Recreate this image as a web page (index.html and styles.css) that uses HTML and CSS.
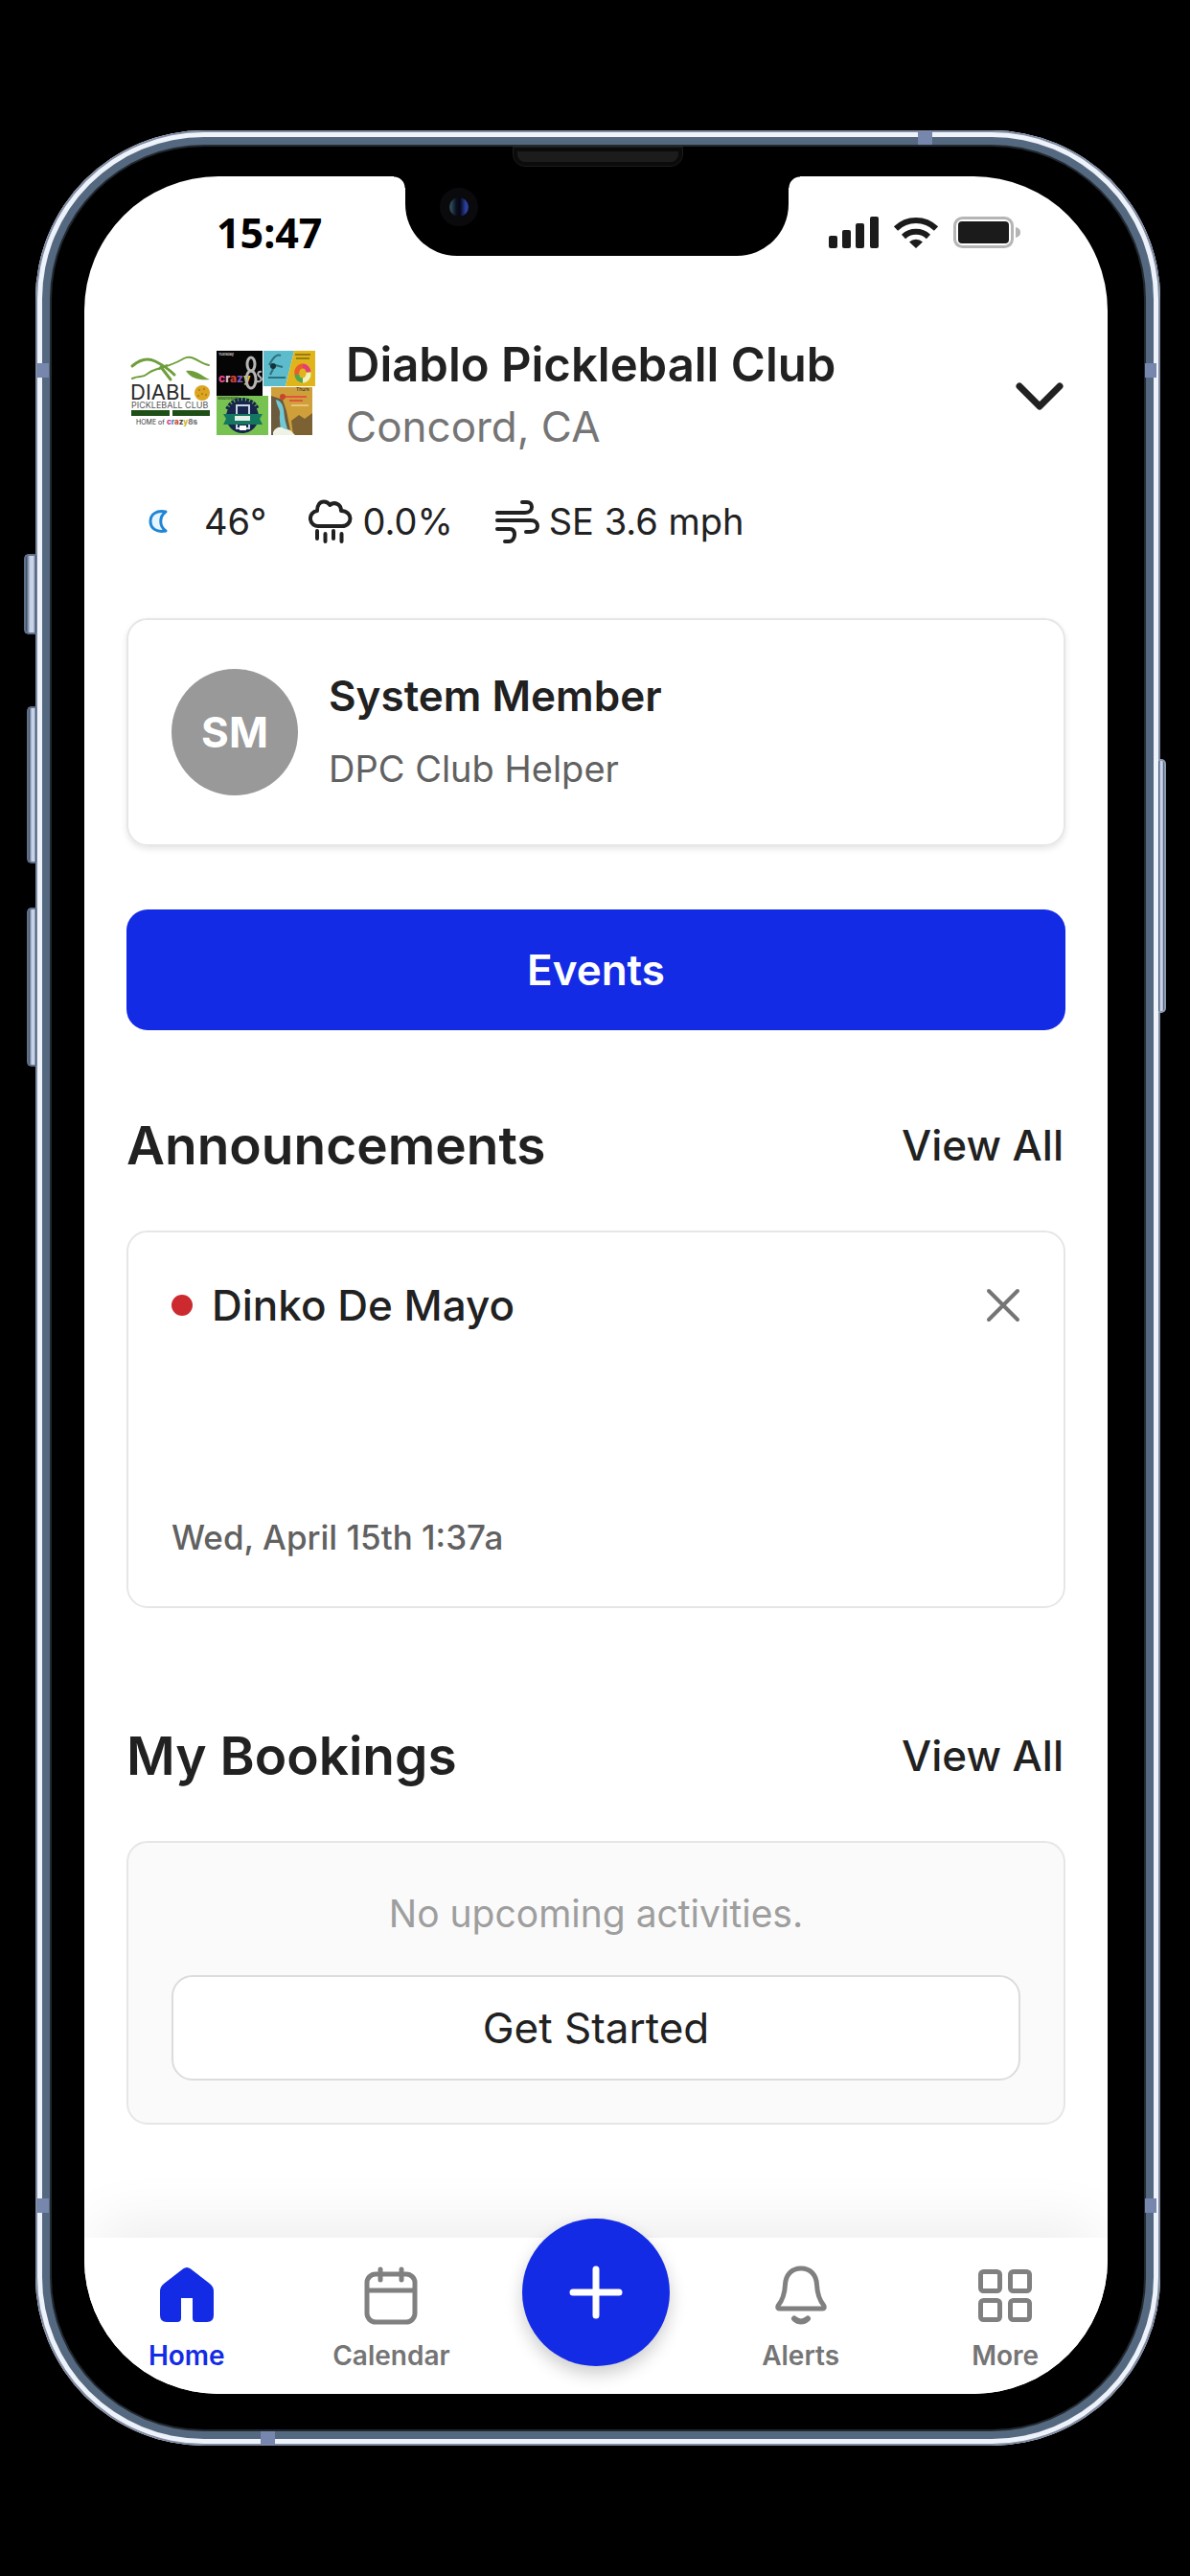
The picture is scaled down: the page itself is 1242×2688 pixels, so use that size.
FILE: index.html
```html
<!DOCTYPE html>
<html lang="en">
<head>
<meta charset="utf-8">
<meta name="viewport" content="width=device-width, initial-scale=1">
<title>Diablo Pickleball Club</title>
<link rel="stylesheet" href="styles.css">
</head>
<body>
<div class="phone">
  <span class="key key-mute"></span>
  <span class="key key-up"></span>
  <span class="key key-down"></span>
  <span class="key key-power"></span>
  <span class="band band-side band-left band-high"></span>
  <span class="band band-side band-right band-high"></span>
  <span class="band band-side band-left band-low"></span>
  <span class="band band-side band-right band-low"></span>
  <span class="band band-top"></span>
  <span class="band band-bottom"></span>
  <span class="speaker"></span>

  <div class="screen">
    <div class="notch"><span class="camera"></span></div>

    <div class="status">
      <span class="time">15:47</span>
      <div class="status-icons">
        <svg width="52" height="34" viewBox="0 0 52 34" fill="#1b1b1b" aria-hidden="true">
          <rect x="0" y="20" width="9" height="13" rx="2"/><rect x="14" y="14" width="9" height="19" rx="2"/>
          <rect x="28" y="7" width="9" height="26" rx="2"/><rect x="43" y="0" width="9" height="33" rx="2"/>
        </svg>
        <svg width="46" height="34" viewBox="0 0 46 34" fill="none" stroke="#1b1b1b" stroke-width="6" aria-hidden="true">
          <path d="M2 12.500A30 30 0 0 1 44 12.500"/><path d="M10 21A19 19 0 0 1 36 21"/>
          <path d="M16 26.500a10 10 0 0 1 14 0L23 33z" fill="#1b1b1b" stroke="none"/>
        </svg>
        <svg width="70" height="34" viewBox="0 0 70 34" aria-hidden="true">
          <rect x="1.500" y="1.500" width="60" height="30" rx="8" fill="#fff" stroke="#b5b5b5" stroke-width="3"/>
          <rect x="5" y="5" width="53" height="23" rx="4" fill="#1b1b1b"/>
          <path d="M65 11c4 1 5 3 5 5.500s-1 4.500-5 5.500z" fill="#b5b5b5"/>
        </svg>
      </div>
    </div>

    <main class="content">
      <header class="club">
        <svg class="club-logo" width="200" height="104" viewBox="0 0 200 104" role="img" aria-label="Diablo Pickleball Club logo">
          <g fill="none" stroke="#6f9f3c" stroke-linecap="round">
            <path d="M6 21C14 14 22 12 30 16S46 26 50 30" stroke-width="3"/>
            <path d="M34 24C44 20 52 18 60 13S76 18 86 20" stroke-width="2"/>
            <path d="M6 34C14 30 16 34 22 29S36 24 42 20" stroke-width="2"/>
            <path d="M36 22L46 35" stroke-width="3"/>
          </g>
          <path d="M62 26C72 24 78 31 87 35C78 36 68 35 62 26z" fill="#6f9f3c"/>
          <text x="4" y="56" font-size="22" fill="#2b2b2b" class="logo-text">DIABL</text>
          <circle cx="79" cy="49" r="8" fill="#dba520"/>
          <g fill="#a87b10"><circle cx="76" cy="46" r="1"/><circle cx="81" cy="45" r="1"/><circle cx="79" cy="50" r="1"/><circle cx="75" cy="52" r="1"/><circle cx="83" cy="51" r="1"/></g>
          <text x="5" y="65" font-size="9" fill="#555" class="logo-text">PICKLEBALL CLUB</text>
          <path d="M5 67h40v6H5zM48 67h39v6H48z" fill="#1d4f17"/>
          <text x="10" y="82" font-size="7" fill="#333" class="logo-text">HOME of</text>
          <text x="42" y="82" font-size="8" class="logo-fun"><tspan fill="#c33a8a">c</tspan><tspan fill="#3c8ac3">r</tspan><tspan fill="#d2462f">a</tspan><tspan fill="#444">z</tspan><tspan fill="#d5b32a">y</tspan><tspan fill="#777">8s</tspan></text>
          <rect x="94" y="5" width="48" height="47" fill="#050505"/>
          <text x="96" y="10" font-size="4" fill="#fff" class="logo-text">Tuesday</text>
          <text x="96" y="38" font-size="12" class="logo-fun"><tspan fill="#ee4a8a">c</tspan><tspan fill="#e8b9d6">r</tspan><tspan fill="#d9433a">a</tspan><tspan fill="#7a5fc0">z</tspan><tspan fill="#e6c62c">y</tspan></text>
          <g fill="none" stroke="#b5b5b5" stroke-width="3"><ellipse cx="130" cy="19" rx="4" ry="7"/><ellipse cx="130" cy="35" rx="5" ry="9"/><path d="M141 27c-4-1-5 3-2 5s2 6-3 5" stroke-width="2"/></g>
          <path d="M143 5h32l-9 37h-23z" fill="#5cbccb"/><path d="M175 5h22v37h-31z" fill="#e0b51b"/>
          <path d="M149 20c4-8 8-12 12-10M150 30l5-10 8 2M148 33h18" stroke="#2e6f7d" fill="none" stroke-width="2"/>
          <circle cx="153" cy="21" r="3" fill="#16323a"/>
          <path d="M176 9h16M177 13h14" stroke="#9a7c12" stroke-width="2"/>
          <g fill="none" stroke-width="5"><path d="M178 30a6 7 0 0 1 6-9" stroke="#e95c2e"/><path d="M184 21a6 7 0 0 1 6 6" stroke="#e43d7a"/><path d="M190 28a6 7 0 0 1-6 8" stroke="#f2f2c0"/><path d="M184 36a6 6 0 0 1-6-6" stroke="#4ea654"/></g>
          <rect x="94" y="52" width="54" height="41" fill="#78c251"/>
          <text x="95" y="56" font-size="4" fill="#222" class="logo-text">Wednesday</text>
          <circle cx="121" cy="74" r="17" fill="#17264c"/>
          <path d="M105 66c4-8 10-10 16-10s12 2 16 10" fill="none" stroke="#17264c" stroke-width="4" stroke-dasharray="3 1"/>
          <path d="M115 62h13v24h-13z" fill="none" stroke="#cbd5e4" stroke-width="2"/>
          <path d="M101 71h41l-3 5 3 6h-41l3-6z" fill="#14775f"/><path d="M113 73h16v5h-16z" fill="#e3efe9"/><path d="M118 83h7v5h-7z" fill="#fff"/>
          <rect x="151" y="43" width="43" height="50" fill="#cfa03a"/>
          <path d="M151 52l12 4 4 12 5 25h-21z" fill="#6b5a3c"/><path d="M172 78l8-6 6 4 8-6v23h-20z" fill="#7c6232"/>
          <path d="M156 56c8 2 8 10 9 18s3 10 4 18h-9c2-8-1-14 0-20s-3-8-4-16z" fill="#72c9d6"/>
          <path d="M153 90c3-6 8-6 11-4s6 0 9 4l3 3h-23z" fill="#eef3e6"/>
          <text x="177" y="47" font-size="5" fill="#222" class="logo-text">Thurs</text>
          <path d="M166 53h22M170 57h14" stroke="#e2553a" stroke-width="2"/><path d="M172 62h18" stroke="#e8c476" stroke-width="2"/>
          <circle cx="163" cy="53" r="3" fill="#c8442e"/>
        </svg>
        <div class="club-name">
          <h1>Diablo Pickleball Club</h1>
          <p>Concord, CA</p>
        </div>
        <button class="icon-button" type="button" aria-label="Switch club">
          <svg width="50" height="30" viewBox="0 0 50 30" fill="none" stroke="#212121" stroke-width="7" stroke-linecap="round" stroke-linejoin="round"><path d="M4 5l21 21L46 5"/></svg>
        </button>
      </header>

      <div class="weather">
        <span class="reading">
          <svg class="moon" width="20" height="24" viewBox="0 0 20 24" fill="#e6f5ff" stroke="#1f86d6" stroke-width="3" stroke-linejoin="round" aria-hidden="true"><path d="M18 2C8 0 2 5 2 12s6 12 16 10C11 17 11 7 18 2z"/></svg>
          46°
        </span>
        <span class="reading">
          <svg width="46" height="46" viewBox="0 0 46 46" fill="none" stroke="#212121" stroke-width="4" stroke-linecap="round" stroke-linejoin="round" aria-hidden="true"><path d="M11 28a8 8 0 0 1-2-16C9 6 12 2.500 16 2.500c3 0 5 1.500 6.500 3.500C27 2 34 5 34 12c6 0 9.500 4 9.500 8s-3 8-8.500 8z"/><path d="M9 33v8M17.500 36v8M26 33v8M34.500 36v8"/></svg>
          0.0%
        </span>
        <span class="reading">
          <svg width="46" height="46" viewBox="0 0 46 46" fill="none" stroke="#212121" stroke-width="4" stroke-linecap="round" aria-hidden="true"><path d="M2 14h29c5 0 7-3 7-6s-2-5-5-5h-5"/><path d="M2 22h35c5 0 7 3 7 6s-2 6-7 6h-5"/><path d="M2 31h13c4 0 5 3 5 6s-2 7-6 7h-4"/></svg>
          SE 3.6 mph
        </span>
      </div>

      <section class="card member">
        <div class="avatar">SM</div>
        <div class="member-text">
          <h2>System Member</h2>
          <p>DPC Club Helper</p>
        </div>
      </section>

      <button class="primary" type="button">Events</button>

      <section class="section">
        <div class="section-head"><h2>Announcements</h2><a href="#announcements">View All</a></div>
        <article class="card notice">
          <div class="notice-head">
            <span class="dot"></span>
            <h3>Dinko De Mayo</h3>
            <button class="icon-button" type="button" aria-label="Dismiss">
              <svg width="36" height="36" viewBox="0 0 36 36" stroke="#757575" stroke-width="4" stroke-linecap="round"><path d="M3 3l30 30M33 3L3 33"/></svg>
            </button>
          </div>
          <time>Wed, April 15th 1:37a</time>
        </article>
      </section>

      <section class="section bookings">
        <div class="section-head"><h2>My Bookings</h2><a href="#bookings">View All</a></div>
        <div class="card empty">
          <p>No upcoming activities.</p>
          <button class="secondary" type="button">Get Started</button>
        </div>
      </section>
    </main>

    <nav class="tabs">
      <a class="tab active" href="#home">
        <svg width="56" height="62" viewBox="0 0 56 62" fill="#142be6" aria-hidden="true"><path d="M24 3.500q4-3 8 0L52 19q4 3 4 8v25q0 7-7 7H38q-4 0-4-4V34H22v21q0 4-4 4H7q-7 0-7-7V27q0-5 4-8z"/></svg>
        Home
      </a>
      <a class="tab" href="#calendar">
        <svg width="56" height="62" viewBox="0 0 56 62" fill="none" stroke="#808080" stroke-width="5" stroke-linecap="round" aria-hidden="true"><rect x="3" y="9" width="50" height="50" rx="9"/><path d="M3 26h50" stroke-linecap="butt"/><path d="M17 4v11M39 4v11"/></svg>
        Calendar
      </a>
      <button class="add" type="button" aria-label="Add">
        <svg width="58" height="58" viewBox="0 0 58 58" stroke="#fff" stroke-width="7" stroke-linecap="round"><path d="M29 5v48M5 29h48"/></svg>
      </button>
      <a class="tab" href="#alerts">
        <svg width="56" height="62" viewBox="0 0 56 62" fill="none" stroke="#808080" stroke-width="5" stroke-linecap="round" stroke-linejoin="round" aria-hidden="true"><path d="M28 3C18 3 12 10 11.500 20C11 30 9 36 4 42q-1 3 2 3h44q3 0 2-3c-5-6-7-12-7.500-22C44 10 38 3 28 3z"/><path d="M21 55.500q7 6 14 0" stroke-width="6"/></svg>
        Alerts
      </a>
      <a class="tab" href="#more">
        <svg width="56" height="62" viewBox="0 0 56 62" fill="none" stroke="#808080" stroke-width="5" aria-hidden="true"><rect x="2.500" y="6.500" width="20" height="20" rx="3"/><rect x="33.500" y="6.500" width="20" height="20" rx="3"/><rect x="2.500" y="36.500" width="20" height="20" rx="3"/><rect x="33.500" y="36.500" width="20" height="20" rx="3"/></svg>
        More
      </a>
    </nav>
  </div>
</div>
</body>
</html>
```
FILE: styles.css
```css
* { box-sizing: border-box; }

body {
  margin: 0;
  min-height: 100vh;
  padding: 136px 31px 136px 37px;
  background: #000;
  color: #212121;
  font-family: Inter, "Liberation Sans", sans-serif;
  font-size: 44px;
  line-height: 56px;
}

h1, h2, h3, p { margin: 0; }
a { color: inherit; text-decoration: none; }
button { font: inherit; color: inherit; border: 0; padding: 0; background: none; }
svg { display: block; flex: none; }

/* Device frame */
.phone {
  position: relative;
  display: flex;
  min-height: calc(100vh - 272px);
  padding: 48px 55px 54px 51px;
  border-radius: 176px;
  box-shadow:
    inset 0 0 0 2px #7f8a9f,
    inset 0 0 0 7px #edf2fb,
    inset 0 0 0 15px #54687f,
    inset 0 0 0 17px #22282f;
}

.key {
  position: absolute;
  left: -9px;
  width: 10px;
  border: 2px solid #5f7089;
  border-right: 0;
  border-radius: 5px 0 0 5px;
  background: linear-gradient(90deg, #33415a, #c6d3e8 40%, #c6d3e8 70%, #33415a);
}
.key-mute { top: 442px; left: -12px; width: 13px; height: 84px; }
.key-up { top: 601px; height: 164px; }
.key-down { top: 811px; height: 166px; }
.key-power {
  top: 656px;
  right: -6px;
  left: auto;
  width: 8px;
  height: 265px;
  border: 2px solid #8c9aaf;
  border-left: 0;
  border-radius: 0 5px 5px 0;
}

.band { position: absolute; background: #7686ac; }
.band-side { width: 12px; height: 15px; }
.band-left { left: 2px; }
.band-right { right: 4px; }
.band-high { top: 243px; }
.band-low { bottom: 243px; }
.band-top { top: 1px; right: 238px; width: 15px; height: 14px; }
.band-bottom { bottom: 1px; left: 235px; width: 15px; height: 14px; }

.speaker {
  position: absolute;
  top: 18px;
  left: 50%;
  width: 176px;
  height: 19px;
  margin-left: -88px;
  border: 4px solid #0b0b0b;
  border-radius: 0 0 12px 12px;
  outline: 1px solid #1c1c1c;
  background: #1c1c1c;
}

.screen {
  position: relative;
  display: flex;
  flex: 1;
  flex-direction: column;
  min-width: 0;
  overflow: hidden;
  border-radius: 140px;
  background: #fff;
}

.notch {
  position: absolute;
  top: 0;
  left: 50%;
  width: 400px;
  height: 83px;
  margin-left: -199px;
  border-radius: 0 0 54px 54px;
  background: #000;
}
.notch::before,
.notch::after {
  content: "";
  position: absolute;
  top: 0;
  width: 12px;
  height: 12px;
}
.notch::before { right: 100%; background: radial-gradient(circle at 0 100%, transparent 11px, #000 12px); }
.notch::after { left: 100%; background: radial-gradient(circle at 100% 100%, transparent 11px, #000 12px); }

.camera {
  position: absolute;
  top: 12px;
  left: 36px;
  width: 40px;
  height: 40px;
  border: 10px solid #0a0a0c;
  border-radius: 50%;
  background: linear-gradient(90deg, #2c4a55 10%, #0a0f22 35%, #05060f 55%, #2b3f9e 85%);
}

/* Status bar */
.status {
  display: flex;
  align-items: center;
  justify-content: space-between;
  height: 116px;
  padding: 2px 91px 0 138px;
}
.time { color: #000; font: bold 43px/56px "Noto Sans", "Open Sans", sans-serif; }
.status-icons { display: flex; gap: 16px; }

/* Home content */
.content {
  display: flex;
  flex: 1;
  flex-direction: column;
  padding: 51px 44px 118px;
}

.club { display: flex; align-items: center; }
.club-name { display: grid; gap: 4px; flex: 1; margin-left: 29px; line-height: 60px; }
.club-name h1 { font-size: 49px; font-weight: 600; }
.club-name p { color: #757575; }
.club .icon-button { margin-right: 2px; }
.logo-text { font-family: Inter, "Liberation Sans", sans-serif; }
.logo-fun { font-family: Inter, "Liberation Sans", sans-serif; font-weight: 800; }

.weather { display: flex; align-items: center; gap: 44px; margin-top: 45px; font-size: 38px; line-height: 48px; }
.reading { display: flex; align-items: center; gap: 10px; white-space: nowrap; }
.moon { margin: 0 28px 0 23px; }

.card { border: 2px solid #e6e6e6; border-radius: 22px; }

.member {
  display: flex;
  align-items: center;
  gap: 32px;
  margin-top: 77px;
  padding: 51px 45px;
  box-shadow: 0 3px 6px rgba(0, 0, 0, .1);
}
.avatar {
  display: grid;
  place-items: center;
  width: 132px;
  height: 132px;
  border-radius: 50%;
  background: #999;
  color: #fff;
  font-weight: 700;
}
.member-text { display: grid; gap: 20px; }
.member-text h2 { font-size: 44px; font-weight: 600; }
.member-text p { color: #616161; font-size: 38px; }

.primary {
  height: 126px;
  margin-top: 66px;
  border-radius: 22px;
  background: #142be6;
  color: #fff;
  font-weight: 600;
}

.section { margin-top: 88px; }
.bookings { margin-top: 122px; }
.section-head { display: flex; align-items: center; justify-content: space-between; margin-bottom: 57px; }
.section-head h2 { font-size: 55px; font-weight: 600; line-height: 64px; }
.section-head a { margin-right: 2px; font-weight: 500; }

.notice {
  display: flex;
  flex-direction: column;
  justify-content: space-between;
  min-height: 394px;
  padding: 48px 45px;
}
.notice-head { display: flex; align-items: center; }
.notice-head h3 { flex: 1; margin-left: 20px; font-size: 44px; font-weight: 500; }
.dot { width: 22px; height: 22px; border-radius: 50%; background: #cc2a2e; }
.notice time { color: #616161; font-size: 35px; font-weight: 500; line-height: 48px; }

.empty { padding: 50px 45px 44px; background: #fafafa; text-align: center; }
.empty p { color: #9e9e9e; font-size: 39px; line-height: 48px; }
.secondary {
  width: 100%;
  height: 110px;
  margin-top: 40px;
  border: 2px solid #dcdcdc;
  border-radius: 22px;
  background: #fff;
}

/* Tab bar */
.tabs {
  position: relative;
  display: grid;
  grid-template-columns: repeat(5, 1fr);
  padding: 29px 0 22px;
  background: #fff;
  box-shadow: 0 -30px 60px -14px rgba(0, 0, 0, .07);
  color: #757575;
  font-size: 28px;
  font-weight: 600;
  line-height: 36px;
}
.tab { display: grid; justify-items: center; gap: 14px; }
.active { color: #142be6; }
.add {
  display: grid;
  place-items: center;
  justify-self: center;
  width: 154px;
  height: 154px;
  margin: -49px 0 -5px;
  border-radius: 50%;
  background: #142be6;
  box-shadow: 0 8px 18px rgba(0, 0, 0, .2);
}
```
